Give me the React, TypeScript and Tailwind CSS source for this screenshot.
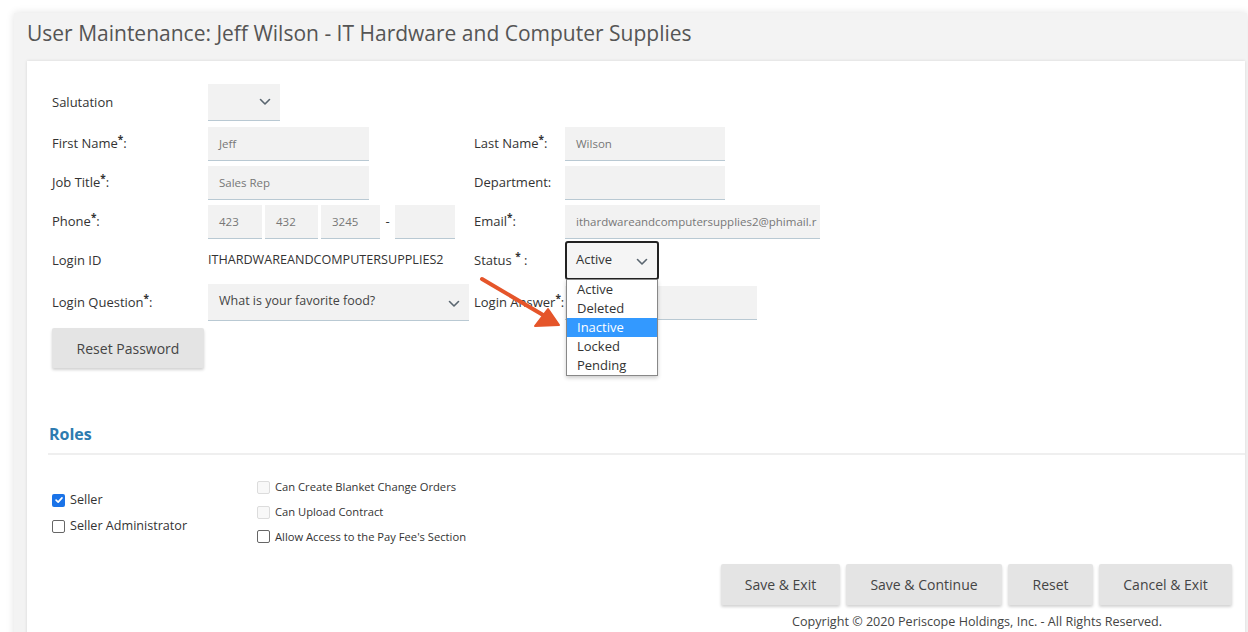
import React from 'react';

const font = { fontFamily: '"Open Sans", "Noto Sans", sans-serif' };

const Chevron: React.FC<{ className?: string }> = ({ className }) => (
  <svg viewBox="0 0 12 8" className={className} fill="none" stroke="#5a6670" strokeWidth="1.6" strokeLinecap="round" strokeLinejoin="round">
    <path d="M1.5 1.5 6 6l4.5-4.5" />
  </svg>
);

const Req: React.FC<{ text: string; gap?: boolean }> = ({ text, gap }) => (
  <span>
    {text}
    {gap && ' '}
    <sup className="text-[10px] font-bold">*</sup>
    {gap && ' '}:
  </span>
);

const Field: React.FC<{ value?: string; w: string }> = ({ value, w }) => (
  <div className={`${w} h-[34px] bg-[#f2f2f2] border-b border-[#b9c9d3] px-[11px] flex items-center text-[11.5px] text-[#777] overflow-hidden whitespace-nowrap`}>
    {value}
  </div>
);

const Box: React.FC<{ checked?: boolean; disabled?: boolean }> = ({ checked, disabled }) =>
  checked ? (
    <span className="w-[13px] h-[13px] rounded-[2px] bg-[#1a73e8] flex items-center justify-center">
      <svg viewBox="0 0 12 12" className="w-[10px] h-[10px]" fill="none" stroke="white" strokeWidth="2" strokeLinecap="round" strokeLinejoin="round">
        <path d="M2.5 6.2 5 8.6l4.6-5.2" />
      </svg>
    </span>
  ) : (
    <span className={`w-[13px] h-[13px] rounded-[2px] border ${disabled ? 'border-[#dcdcdc] bg-[#f8f8f8]' : 'border-[#666] bg-white'}`} />
  );

const Btn: React.FC<{ label: string; w: string }> = ({ label, w }) => (
  <button className={`${w} h-[41px] bg-[#e4e4e4] rounded-[2px] text-[14px] text-[#444] shadow-[0_2px_3px_rgba(0,0,0,0.18)]`}>{label}</button>
);

export default function App() {
  return (
    <div className="w-[1248px] h-[632px] overflow-hidden bg-white text-[#333]" style={font}>
      <div className="ml-[14px] mt-[13px] w-[1233px] bg-[#f3f3f3] shadow-[0_0_8px_rgba(0,0,0,0.12)]">
        <h1 className="h-[48px] pl-[13px] pt-[5px] text-[21px] text-[#555]">
          User Maintenance: Jeff Wilson - IT Hardware and Computer Supplies
        </h1>
        <div className="ml-[13px] mr-[2px] bg-white shadow-[0_0_3px_rgba(0,0,0,0.12)] pl-[25px] pr-[12px] pt-[23px] pb-[20px] text-[13px]">
          {/* user details */}
          <div className="flex flex-col gap-[5px]">
            <div className="flex items-center h-[37px]">
              <div className="w-[156px] mt-[1px]">Salutation</div>
              <div className="w-[72px] h-[37px] bg-[#f2f2f2] border-b border-[#b9c9d3] flex items-center justify-end pr-[9px]">
                <Chevron className="w-[12px] h-[8px]" />
              </div>
            </div>
            <div className="flex items-center mt-[1px]">
              <div className="w-[156px]"><Req text="First Name" /></div>
              <div className="w-[266px]"><Field value="Jeff" w="w-[161px]" /></div>
              <div className="w-[91px]"><Req text="Last Name" /></div>
              <Field value="Wilson" w="w-[160px]" />
            </div>
            <div className="flex items-center">
              <div className="w-[156px]"><Req text="Job Title" /></div>
              <div className="w-[266px]"><Field value="Sales Rep" w="w-[161px]" /></div>
              <div className="w-[91px]">Department:</div>
              <Field w="w-[160px]" />
            </div>
            <div className="flex items-center">
              <div className="w-[156px]"><Req text="Phone" /></div>
              <div className="w-[266px] flex items-center gap-[3px]">
                <Field value="423" w="w-[54px]" />
                <Field value="432" w="w-[53px]" />
                <Field value="3245" w="w-[59px]" />
                <span className="w-[9px] text-center">-</span>
                <Field w="w-[60px]" />
              </div>
              <div className="w-[91px]"><Req text="Email" /></div>
              <Field value="ithardwareandcomputersupplies2@phimail.r" w="w-[255px]" />
            </div>
            <div className="flex items-center -mt-[3px]">
              <div className="w-[156px]">Login ID</div>
              <div className="w-[266px] text-[12.6px]">ITHARDWAREANDCOMPUTERSUPPLIES2</div>
              <div className="w-[91px]"><Req text="Status" gap /></div>
              <div className="relative">
                <div className="w-[94px] h-[39px] bg-[#f5f5f5] border-2 border-[#222] rounded-[3px] flex items-center justify-between pl-[9px] pr-[9px] text-[13px]">
                  <span className="-mt-[2px]">Active</span>
                  <Chevron className="w-[12px] h-[8px] mt-[3px]" />
                </div>
                <ul className="absolute left-[1px] top-[38px] w-[92px] bg-white border border-[#888] shadow-[0_2px_4px_rgba(0,0,0,0.2)] z-10 text-[13px] leading-[19px]">
                  <li className="pl-[10px]">Active</li>
                  <li className="pl-[10px]">Deleted</li>
                  <li className="pl-[10px] bg-[#3399ff] text-white">Inactive</li>
                  <li className="pl-[10px]">Locked</li>
                  <li className="pl-[10px]">Pending</li>
                </ul>
              </div>
            </div>
            <div className="flex items-center -mt-[1px]">
              <div className="w-[156px]"><Req text="Login Question" /></div>
              <div className="w-[266px]">
                <div className="w-[261px] h-[37px] bg-[#f2f2f2] border-b border-[#b9c9d3] flex items-center justify-between pl-[11px] pr-[9px] text-[12.5px] text-[#444]">
                  <span className="-mt-[2px]">What is your favorite food?</span>
                  <Chevron className="w-[12px] h-[8px] mt-[3px]" />
                </div>
              </div>
              <div className="w-[91px]"><Req text="Login Answer" /></div>
              <Field w="w-[192px]" />
            </div>
            <div className="mt-[2px]">
              <button className="w-[152px] h-[40px] bg-[#e4e4e4] rounded-[2px] text-[14px] text-[#444] shadow-[0_2px_3px_rgba(0,0,0,0.18)]">
                Reset Password
              </button>
            </div>
          </div>

          {/* roles */}
          <h2 className="mt-[54px] -ml-[3px] text-[16px] font-bold text-[#2d7bb0]">Roles</h2>
          <div className="-ml-[4px] -mr-[12px] mt-[7px] h-[2px] bg-[#efefef]" />
          <div className="flex mt-[24px]">
            <div className="w-[205px] flex flex-col gap-[7px] pt-[12px] text-[12.6px]">
              <label className="flex items-center gap-[5px]"><Box checked />Seller</label>
              <label className="flex items-center gap-[5px]"><Box />Seller Administrator</label>
            </div>
            <div className="flex flex-col gap-[8px] text-[11.2px]">
              <label className="flex items-center gap-[5px]"><Box disabled />Can Create Blanket Change Orders</label>
              <label className="flex items-center gap-[5px]"><Box disabled />Can Upload Contract</label>
              <label className="flex items-center gap-[5px]"><Box />Allow Access to the Pay Fee's Section</label>
            </div>
          </div>

          {/* actions */}
          <div className="flex justify-end gap-[6px] mt-[19px] pr-[1px]">
            <Btn label="Save & Exit" w="w-[119px]" />
            <Btn label="Save & Continue" w="w-[156px]" />
            <Btn label="Reset" w="w-[85px]" />
            <Btn label="Cancel & Exit" w="w-[133px]" />
          </div>
          <p className="mt-[8px] pl-[740px] text-[12.6px] text-[#444]">
            Copyright © 2020 Periscope Holdings, Inc. - All Rights Reserved.
          </p>
        </div>
      </div>

      {/* pointer arrow */}
      <svg className="absolute left-[477px] top-[275px] w-[90px] h-[60px] pointer-events-none" viewBox="0 0 90 60">
        <path d="M5 4 78 47" stroke="#e5552a" strokeWidth="4" strokeLinecap="round" />
        <path d="M82 50 58 51 71 34Z" fill="#e5552a" stroke="#e5552a" strokeWidth="2" strokeLinejoin="round" />
      </svg>
    </div>
  );
}
